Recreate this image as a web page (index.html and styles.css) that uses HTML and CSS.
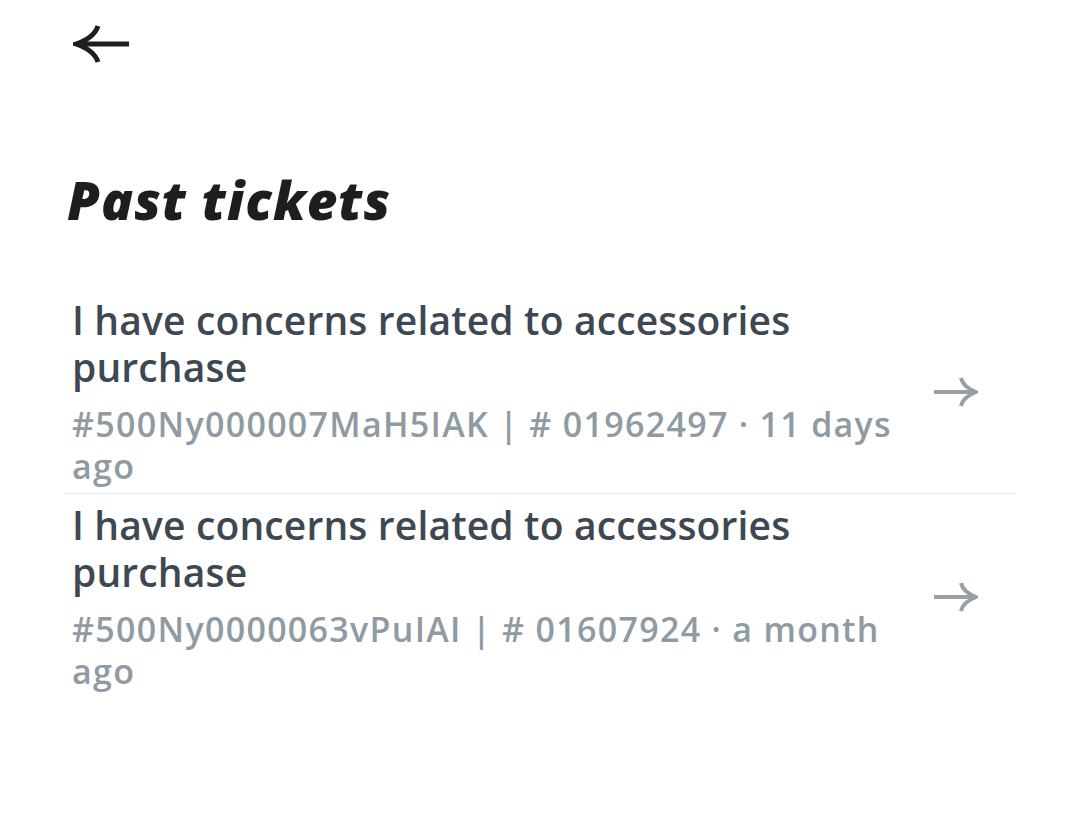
FILE: index.html
```html
<!DOCTYPE html>
<html>
<head>
<meta charset="utf-8">
<link rel="stylesheet" href="styles.css">
</head>
<body>
<div class="page">
  <div class="topbar">
    <svg class="back" width="58" height="40" viewBox="0 0 58 40">
      <path d="M4 20 H56" stroke="#1e1e1e" stroke-width="5" fill="none"/>
      <path d="M25 2 Q21 14 3 20 Q21 26 25 38" stroke="#1e1e1e" stroke-width="5" fill="none"/>
    </svg>
  </div>
  <h1 class="title">Past tickets</h1>
  <ul class="list">
    <li class="item">
      <div class="text">
        <div class="subject">I have concerns related to accessories purchase</div>
        <div class="meta">#500Ny000007MaH5IAK | # 01962497 · 11 days ago</div>
      </div>
      <svg class="go" width="46" height="34" viewBox="0 0 46 34">
        <path d="M2 17 H43" stroke="#989fa5" stroke-width="4" fill="none"/>
        <path d="M29 3 Q31 12 44 17 Q31 22 29 31" stroke="#989fa5" stroke-width="4" fill="none"/>
      </svg>
    </li>
    <li class="item">
      <div class="text">
        <div class="subject">I have concerns related to accessories purchase</div>
        <div class="meta">#500Ny0000063vPuIAI | # 01607924 · a month ago</div>
      </div>
      <svg class="go" width="46" height="34" viewBox="0 0 46 34">
        <path d="M2 17 H43" stroke="#989fa5" stroke-width="4" fill="none"/>
        <path d="M29 3 Q31 12 44 17 Q31 22 29 31" stroke="#989fa5" stroke-width="4" fill="none"/>
      </svg>
    </li>
  </ul>
</div>
</body>
</html>
```
FILE: styles.css
```css
html, body {
  margin: 0;
  padding: 0;
  background: #ffffff;
}
.page {
  font-family: "Open Sans", "Noto Sans", sans-serif;
  padding: 0 64px 0 65px;
}
.topbar {
  height: 90px;
  display: flex;
  align-items: flex-start;
  padding-top: 24px;
  box-sizing: border-box;
  padding-left: 8px;
}
.back {
  display: block;
}
.title {
  margin: 72px 0 0 0;
  font-size: 53px;
  font-style: italic;
  font-weight: 800;
  color: #1e1e1e;
  letter-spacing: 1px;
  line-height: 76px;
  padding-left: 2px;
}
.list {
  list-style: none;
  margin: 51px 0 0 0;
  padding: 0;
}
.item {
  display: flex;
  align-items: center;
  padding: 7px 0 6px 7px;
  border-bottom: 1px solid #e8eaec;
}
.item:last-child {
  border-bottom: none;
}
.text {
  width: 830px;
}
.subject {
  font-size: 39px;
  font-weight: 600;
  color: #3d4852;
  line-height: 47px;
  letter-spacing: 0.15px;
}
.meta {
  margin-top: 13px;
  font-size: 34px;
  font-weight: 600;
  color: #909aa3;
  line-height: 42px;
  letter-spacing: 1.3px;
}
.go {
  display: block;
  margin-left: 30px;
}
```
